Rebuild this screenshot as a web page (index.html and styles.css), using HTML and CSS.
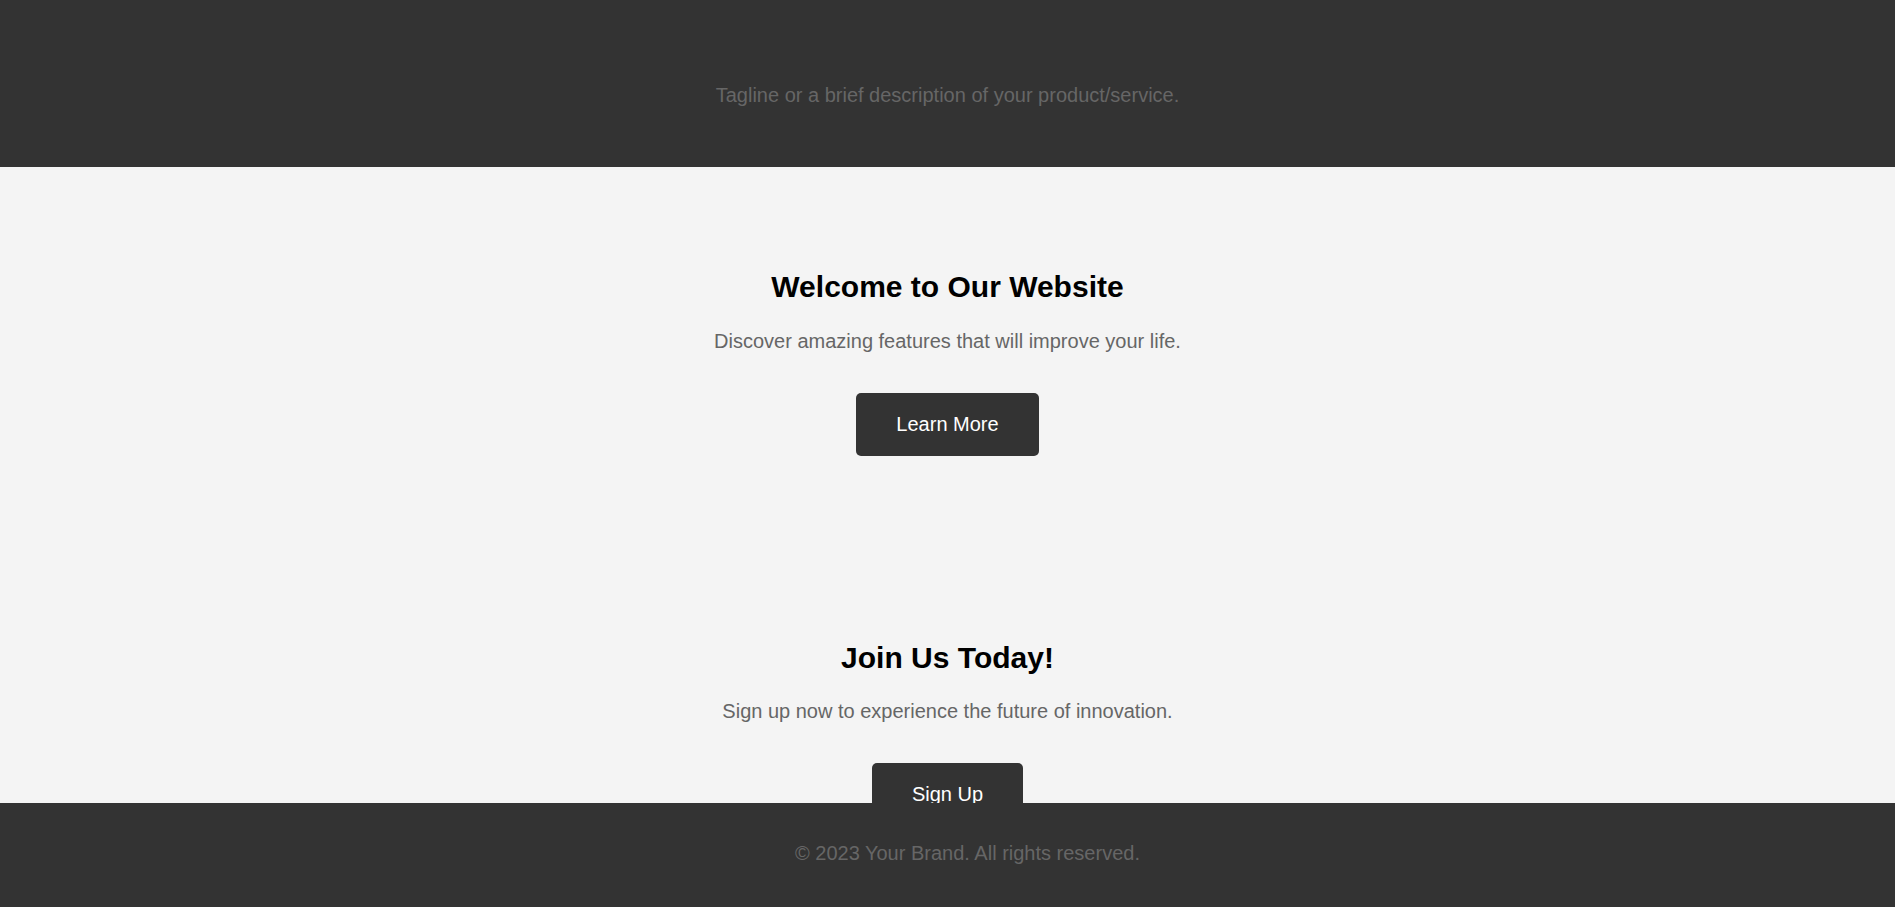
FILE: index.html
```html
<!DOCTYPE html>
<html lang="en">
<head>
<meta charset="utf-8">
<title>Your Brand</title>
<link rel="stylesheet" href="styles.css">
</head>
<body>
<header class="site-header">
  <p class="tagline">Tagline or a brief description of your product/service.</p>
</header>
<main>
  <section class="block">
    <h2 class="block-title">Welcome to Our Website</h2>
    <p class="block-text">Discover amazing features that will improve your life.</p>
    <a class="btn" href="#">Learn More</a>
  </section>
  <section class="block">
    <h2 class="block-title">Join Us Today!</h2>
    <p class="block-text">Sign up now to experience the future of innovation.</p>
    <a class="btn" href="#">Sign Up</a>
  </section>
</main>
<footer class="site-footer">
  <p class="footer-text">&copy; 2023 Your Brand. All rights reserved.</p>
</footer>
</body>
</html>
```
FILE: styles.css
```css
html, body {
  margin: 0;
  padding: 0;
}
body {
  font-family: "Liberation Sans", Arial, sans-serif;
  font-size: 20px;
  background: #f4f4f4;
  color: #000;
}
.site-header {
  background: #333;
  padding: 84px 20px 60px;
  text-align: center;
}
.tagline {
  margin: 0;
  color: #666;
  font-size: 20px;
  line-height: 23px;
}
.block {
  padding: 103px 20px 82px;
  text-align: center;
}
.block-title {
  margin: 0 0 25px;
  font-size: 30px;
  font-weight: bold;
  line-height: 34.5px;
  color: #000;
}
.block-text {
  margin: 0 0 40px;
  color: #666;
  font-size: 20px;
  line-height: 23px;
}
.btn {
  display: inline-block;
  background: #333;
  color: #fff;
  text-decoration: none;
  padding: 20px 40px;
  line-height: 23px;
  font-size: 20px;
  border-radius: 5px;
}
.site-footer {
  position: fixed;
  left: 0;
  bottom: 0;
  width: 100%;
  padding: 20px;
  background: #333;
  text-align: center;
}
.footer-text {
  margin: 19px 0 22px;
  color: #666;
  font-size: 20px;
  line-height: 23px;
}
```
